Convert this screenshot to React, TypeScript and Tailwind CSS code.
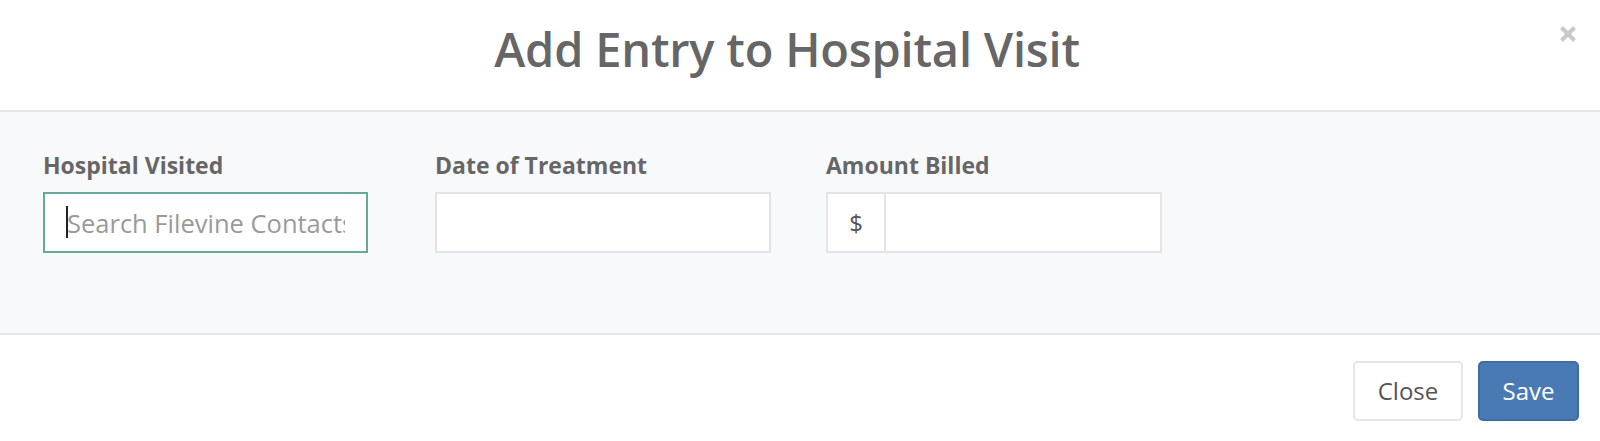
import { useState } from "react";

function Field({ label, width, children }: { label: string; width: string; children: React.ReactNode }) {
    return (
        <div className={`flex flex-col ${width}`}>
            <label className="text-[23px] leading-none font-bold text-[#666] h-[23px]">{label}</label>
            <div className="mt-[15px]">{children}</div>
        </div>
    )
}

function App() {
    const [amount, setAmount] = useState<string>("");
    const [date, setDate] = useState<string>("");

    return (
        <div className="w-[1600px] h-[441px] bg-white font-['Open_Sans',sans-serif] flex flex-col">
            <div className="relative h-[112px] border-b-2 border-[#e4e6e9] flex justify-center pr-[26px]">
                <h1 className="pt-[26px] text-[47px] leading-none font-semibold text-[#666] tracking-[-0.2px]">Add Entry to Hospital Visit</h1>
                <button className="absolute top-[25px] right-[23px] w-[18px] h-[18px] text-[#c9c9c9]">
                    <svg viewBox="0 0 18 18" width="18" height="18">
                        <path d="M2.5 2.5 L15.5 15.5 M15.5 2.5 L2.5 15.5" stroke="currentColor" strokeWidth="4.2" strokeLinecap="butt" />
                    </svg>
                </button>
            </div>

            <div className="h-[223px] bg-[#f8f9fb] border-b-2 border-[#e4e6e9] pl-[43px] pt-[42px] flex flex-row">
                <Field label="Hospital Visited" width="w-[392px]">
                    <div className="relative w-[325px] h-[61px]">
                        <input
                            placeholder="Search Filevine Contacts"
                            className="w-full h-full bg-white border-2 border-[#66a899] pl-[22px] pr-[21px] text-[25.5px] text-[#555] placeholder:text-[#9a9a9a] outline-none"
                        />
                        <span className="absolute left-[23px] top-[14px] w-[2px] h-[32px] bg-[#222]"></span>
                    </div>
                </Field>
                <Field label="Date of Treatment" width="w-[391px]">
                    <input
                        value={date}
                        onChange={(e) => setDate(e.target.value)}
                        className="w-[336px] h-[61px] bg-white border-2 border-[#e2e4e7] px-[20px] text-[24px] text-[#555] outline-none"
                    />
                </Field>
                <Field label="Amount Billed" width="w-[336px]">
                    <div className="flex flex-row w-[336px] h-[61px] bg-white border-2 border-[#e2e4e7]">
                        <span className="w-[58px] flex items-center justify-center border-r-2 border-[#e2e4e7] text-[24px] text-[#555]">$</span>
                        <input
                            value={amount}
                            onChange={(e) => setAmount(e.target.value)}
                            className="flex-1 min-w-0 px-[16px] text-[24px] text-[#555] outline-none"
                        />
                    </div>
                </Field>
            </div>

            <div className="flex-1 flex flex-row justify-end items-start pt-[26px] pr-[21px] gap-[15px]">
                <button className="w-[110px] h-[60px] rounded-[5px] border-2 border-[#e6e6e6] bg-white text-[24px] text-[#555]">Close</button>
                <button className="w-[101px] h-[60px] rounded-[5px] border-2 border-[#3f6ca3] bg-[#4a7ab3] text-[24px] text-white">Save</button>
            </div>
        </div>
    )
}

export default App
